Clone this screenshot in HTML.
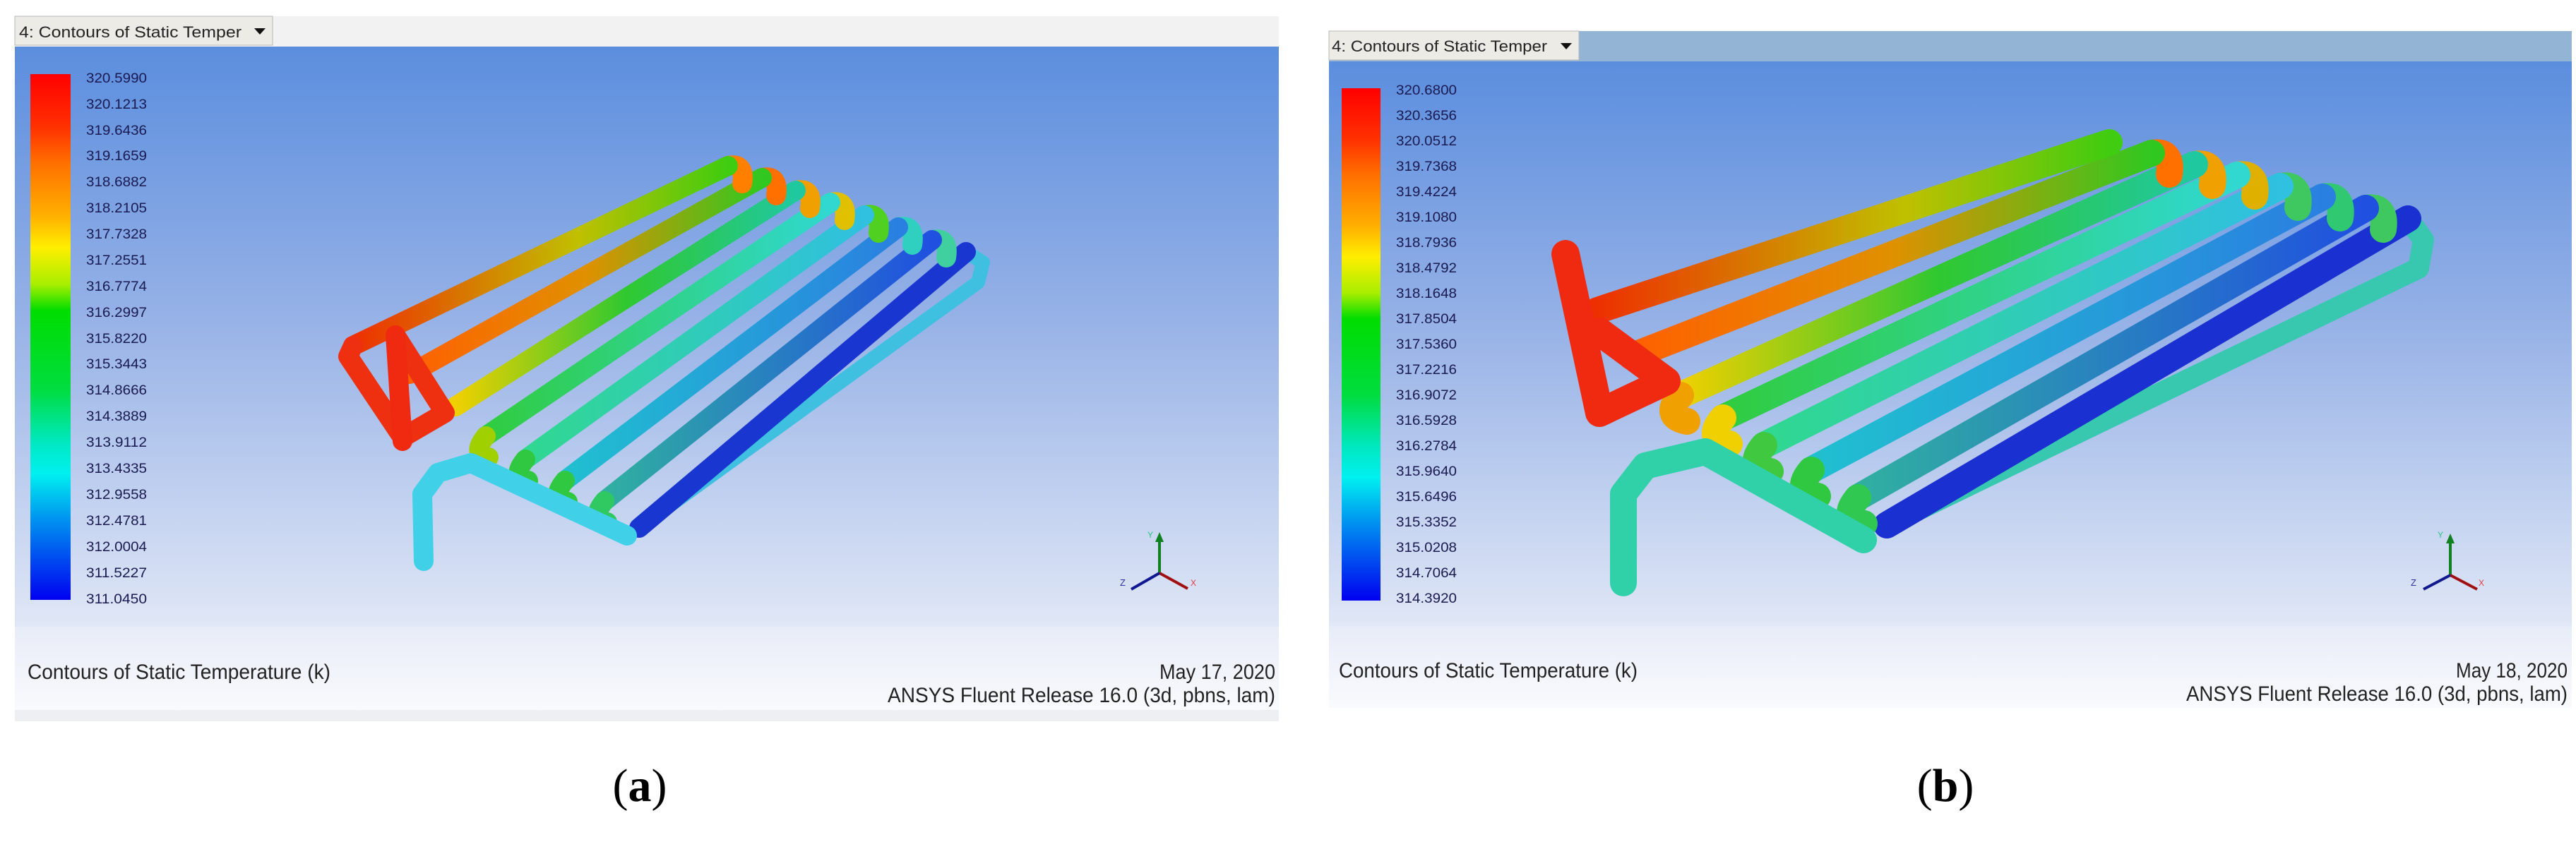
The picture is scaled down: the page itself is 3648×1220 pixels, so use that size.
<!DOCTYPE html>
<html><head><meta charset="utf-8">
<style>
html,body{margin:0;padding:0;background:#fff;}
body{width:3648px;height:1220px;overflow:hidden;position:relative;font-family:"Liberation Sans",sans-serif;}
svg{position:absolute;left:0;top:0;}
</style></head>
<body>
<svg width="3648" height="1220" viewBox="0 0 3648 1220" xmlns="http://www.w3.org/2000/svg" font-family="Liberation Sans, sans-serif">
<defs>
<linearGradient id="bg" x1="0" y1="0" x2="0" y2="1">
<stop offset="0" stop-color="#5b8ede"/><stop offset="0.45" stop-color="#94b0e6"/><stop offset="1" stop-color="#e0e7f6"/>
</linearGradient>
<linearGradient id="ft" x1="0" y1="0" x2="0" y2="1">
<stop offset="0" stop-color="#e8ecf8"/><stop offset="1" stop-color="#f9fafd"/>
</linearGradient>
<linearGradient id="jet" x1="0" y1="0" x2="0" y2="1">
<stop offset="0" stop-color="#ff0000"/><stop offset="0.1" stop-color="#ff3000"/><stop offset="0.17" stop-color="#ff7000"/>
<stop offset="0.27" stop-color="#ffb000"/><stop offset="0.33" stop-color="#ffee00"/><stop offset="0.4" stop-color="#a8ee00"/>
<stop offset="0.45" stop-color="#00dd00"/><stop offset="0.6" stop-color="#00dd40"/><stop offset="0.7" stop-color="#00e8c0"/>
<stop offset="0.76" stop-color="#00f0f0"/><stop offset="0.85" stop-color="#0090f0"/><stop offset="1" stop-color="#0000f0"/>
</linearGradient>
<linearGradient id="gOR" x1="1" y1="0" x2="0" y2="0"><stop offset="0" stop-color="#40cc10"/><stop offset="0.4" stop-color="#c0c000"/><stop offset="1" stop-color="#ee3000"/></linearGradient>
<linearGradient id="gGO" x1="1" y1="0" x2="0" y2="0"><stop offset="0" stop-color="#30c820"/><stop offset="0.5" stop-color="#e09000"/><stop offset="1" stop-color="#ff6000"/></linearGradient>
<linearGradient id="gGY" x1="1" y1="0" x2="0" y2="0"><stop offset="0" stop-color="#20c8a0"/><stop offset="0.5" stop-color="#30c830"/><stop offset="1" stop-color="#f0d000"/></linearGradient>
<linearGradient id="gCG" x1="1" y1="0" x2="0" y2="0"><stop offset="0" stop-color="#30d8d0"/><stop offset="1" stop-color="#30cc40"/></linearGradient>
<linearGradient id="gC" x1="1" y1="0" x2="0" y2="0"><stop offset="0" stop-color="#30c0e0"/><stop offset="1" stop-color="#30d890"/></linearGradient>
<linearGradient id="gCB" x1="1" y1="0" x2="0" y2="0"><stop offset="0" stop-color="#2a80e0"/><stop offset="1" stop-color="#20c0d0"/></linearGradient>
<linearGradient id="gB" x1="1" y1="0" x2="0" y2="0"><stop offset="0" stop-color="#2050e0"/><stop offset="1" stop-color="#30b0a0"/></linearGradient>
<linearGradient id="gDB" x1="0" y1="0" x2="1" y2="0"><stop offset="0" stop-color="#1528c8"/><stop offset="1" stop-color="#2060e0"/></linearGradient>
</defs>

<!-- PANEL A -->
<rect x="21" y="23" width="1790" height="43" fill="#f2f2f2"/>
<rect x="21" y="23" width="365" height="41" fill="#ecebe6" stroke="#b8b8b8"/>
<text x="27" y="53" font-size="22" fill="#222" textLength="315" lengthAdjust="spacingAndGlyphs">4: Contours of Static Temper</text>
<polygon points="360,40 376,40 368,49" fill="#111"/>
<rect x="21" y="66" width="1790" height="822" fill="url(#bg)"/>
<rect x="21" y="888" width="1790" height="118" fill="url(#ft)"/>
<rect x="21" y="1006" width="1790" height="16" fill="#eeeff2"/>
<rect x="43" y="105" width="57" height="745" fill="url(#jet)"/>
<g font-size="19" fill="#1a1a50">
<text x="122" y="117" textLength="86" lengthAdjust="spacingAndGlyphs">320.5990</text>
<text x="122" y="154" textLength="86" lengthAdjust="spacingAndGlyphs">320.1213</text>
<text x="122" y="191" textLength="86" lengthAdjust="spacingAndGlyphs">319.6436</text>
<text x="122" y="227" textLength="86" lengthAdjust="spacingAndGlyphs">319.1659</text>
<text x="122" y="264" textLength="86" lengthAdjust="spacingAndGlyphs">318.6882</text>
<text x="122" y="301" textLength="86" lengthAdjust="spacingAndGlyphs">318.2105</text>
<text x="122" y="338" textLength="86" lengthAdjust="spacingAndGlyphs">317.7328</text>
<text x="122" y="375" textLength="86" lengthAdjust="spacingAndGlyphs">317.2551</text>
<text x="122" y="412" textLength="86" lengthAdjust="spacingAndGlyphs">316.7774</text>
<text x="122" y="449" textLength="86" lengthAdjust="spacingAndGlyphs">316.2997</text>
<text x="122" y="486" textLength="86" lengthAdjust="spacingAndGlyphs">315.8220</text>
<text x="122" y="522" textLength="86" lengthAdjust="spacingAndGlyphs">315.3443</text>
<text x="122" y="559" textLength="86" lengthAdjust="spacingAndGlyphs">314.8666</text>
<text x="122" y="596" textLength="86" lengthAdjust="spacingAndGlyphs">314.3889</text>
<text x="122" y="633" textLength="86" lengthAdjust="spacingAndGlyphs">313.9112</text>
<text x="122" y="670" textLength="86" lengthAdjust="spacingAndGlyphs">313.4335</text>
<text x="122" y="707" textLength="86" lengthAdjust="spacingAndGlyphs">312.9558</text>
<text x="122" y="744" textLength="86" lengthAdjust="spacingAndGlyphs">312.4781</text>
<text x="122" y="781" textLength="86" lengthAdjust="spacingAndGlyphs">312.0004</text>
<text x="122" y="818" textLength="86" lengthAdjust="spacingAndGlyphs">311.5227</text>
<text x="122" y="855" textLength="86" lengthAdjust="spacingAndGlyphs">311.0450</text>
</g>
<!-- tubes a -->
<g fill="none" stroke-linecap="round" stroke-linejoin="round" stroke-width="28">
<polyline points="1368,357 1392,372 1385,400 905,748" stroke="#40c0e0" stroke-width="20"/>
<line x1="1368" y1="357" x2="905" y2="748" stroke="#1a36d0"/>
<path d="M1320,340 Q1345,335 1340,365" stroke="#40d0a0"/>
<line x1="1320" y1="340" x2="856" y2="710" stroke="url(#gB)"/>
<path d="M856,710 Q835,735 860,740" stroke="#30c860"/>
<path d="M1272,322 Q1297,317 1292,347" stroke="#30d0c0"/>
<line x1="1272" y1="322" x2="800" y2="681" stroke="url(#gCB)"/>
<path d="M800,681 Q779,706 804,711" stroke="#30c840"/>
<path d="M1224,305 Q1249,300 1244,330" stroke="#50d020"/>
<line x1="1224" y1="305" x2="744" y2="651" stroke="url(#gC)"/>
<path d="M744,651 Q723,676 748,681" stroke="#30c840"/>
<path d="M1176,287 Q1201,282 1196,312" stroke="#e0c000"/>
<line x1="1176" y1="287" x2="688" y2="618" stroke="url(#gCG)"/>
<path d="M688,618 Q667,643 692,648" stroke="#a0d000"/>
<path d="M1127,270 Q1152,265 1147,295" stroke="#f0a000"/>
<line x1="1127" y1="270" x2="645" y2="576" stroke="url(#gGY)"/>
<path d="M1079,252 Q1104,247 1099,277" stroke="#ff7000"/>
<line x1="1079" y1="252" x2="580" y2="530" stroke="url(#gGO)"/>
<path d="M1031,235 Q1056,230 1051,260" stroke="#ff8000"/>
<line x1="1031" y1="235" x2="500" y2="490" stroke="url(#gOR)"/>
<polyline points="888,759 667,656 620,670 598,700 600,795" stroke="#40d0e8"/>
<polyline points="500,490 493,505 570,620 630,585 560,475" stroke="#ee3010"/>
<line x1="560" y1="475" x2="570" y2="625" stroke="#f02a10"/>
</g>
<!-- axes a -->
<g stroke-width="4" fill="none">
<line x1="1642" y1="812" x2="1642" y2="764" stroke="#108020"/>
<line x1="1642" y1="812" x2="1682" y2="834" stroke="#a01010"/>
<line x1="1642" y1="812" x2="1602" y2="835" stroke="#101890"/>
</g>
<polygon points="1636,768 1642,754 1648,768" fill="#108020"/>
<text x="1625" y="762" font-size="12" fill="#30c080">Y</text>
<text x="1686" y="830" font-size="12" fill="#e04040">X</text>
<text x="1586" y="830" font-size="13" fill="#3030a0">Z</text>
<text x="39" y="962" font-size="30" fill="#222" textLength="429" lengthAdjust="spacingAndGlyphs">Contours of Static Temperature (k)</text>
<text x="1806" y="962" font-size="30" fill="#222" text-anchor="end" textLength="164" lengthAdjust="spacingAndGlyphs">May 17, 2020</text>
<text x="1806" y="995" font-size="30" fill="#222" text-anchor="end" textLength="549" lengthAdjust="spacingAndGlyphs">ANSYS Fluent Release 16.0 (3d, pbns, lam)</text>
<text x="906" y="1135" font-size="66" fill="#000" text-anchor="middle" font-family="Liberation Serif, serif">(<tspan font-weight="bold">a</tspan>)</text>

<!-- PANEL B -->
<rect x="1882" y="44" width="1760" height="43" fill="#93b4d4"/>
<rect x="1882" y="44" width="354" height="41" fill="#ecebe6" stroke="#b8b8b8"/>
<text x="1886" y="73" font-size="22" fill="#222" textLength="305" lengthAdjust="spacingAndGlyphs">4: Contours of Static Temper</text>
<polygon points="2210,61 2226,61 2218,70" fill="#111"/>
<rect x="1882" y="87" width="1760" height="800" fill="url(#bg)"/>
<rect x="1882" y="887" width="1760" height="116" fill="url(#ft)"/>
<rect x="1900" y="125" width="55" height="726" fill="url(#jet)"/>
<g font-size="19" fill="#1a1a50">
<text x="1977" y="134" textLength="86" lengthAdjust="spacingAndGlyphs">320.6800</text>
<text x="1977" y="170" textLength="86" lengthAdjust="spacingAndGlyphs">320.3656</text>
<text x="1977" y="206" textLength="86" lengthAdjust="spacingAndGlyphs">320.0512</text>
<text x="1977" y="242" textLength="86" lengthAdjust="spacingAndGlyphs">319.7368</text>
<text x="1977" y="278" textLength="86" lengthAdjust="spacingAndGlyphs">319.4224</text>
<text x="1977" y="314" textLength="86" lengthAdjust="spacingAndGlyphs">319.1080</text>
<text x="1977" y="350" textLength="86" lengthAdjust="spacingAndGlyphs">318.7936</text>
<text x="1977" y="386" textLength="86" lengthAdjust="spacingAndGlyphs">318.4792</text>
<text x="1977" y="422" textLength="86" lengthAdjust="spacingAndGlyphs">318.1648</text>
<text x="1977" y="458" textLength="86" lengthAdjust="spacingAndGlyphs">317.8504</text>
<text x="1977" y="494" textLength="86" lengthAdjust="spacingAndGlyphs">317.5360</text>
<text x="1977" y="530" textLength="86" lengthAdjust="spacingAndGlyphs">317.2216</text>
<text x="1977" y="566" textLength="86" lengthAdjust="spacingAndGlyphs">316.9072</text>
<text x="1977" y="602" textLength="86" lengthAdjust="spacingAndGlyphs">316.5928</text>
<text x="1977" y="638" textLength="86" lengthAdjust="spacingAndGlyphs">316.2784</text>
<text x="1977" y="674" textLength="86" lengthAdjust="spacingAndGlyphs">315.9640</text>
<text x="1977" y="710" textLength="86" lengthAdjust="spacingAndGlyphs">315.6496</text>
<text x="1977" y="746" textLength="86" lengthAdjust="spacingAndGlyphs">315.3352</text>
<text x="1977" y="782" textLength="86" lengthAdjust="spacingAndGlyphs">315.0208</text>
<text x="1977" y="818" textLength="86" lengthAdjust="spacingAndGlyphs">314.7064</text>
<text x="1977" y="854" textLength="86" lengthAdjust="spacingAndGlyphs">314.3920</text>
</g>
<g fill="none" stroke-linecap="round" stroke-linejoin="round" stroke-width="38">
<polyline points="3410,310 3432,340 3425,380 2672,744" stroke="#38c8b0" stroke-width="30"/>
<line x1="3410" y1="310" x2="2672" y2="744" stroke="#1a30d0"/>
<path d="M3350,295 Q3380,290 3375,325" stroke="#40c860"/>
<line x1="3350" y1="295" x2="2631" y2="705" stroke="url(#gB)"/>
<path d="M2631,705 Q2605,735 2640,742" stroke="#30c850"/>
<path d="M3289,279 Q3319,274 3314,309" stroke="#30c870"/>
<line x1="3289" y1="279" x2="2565" y2="666" stroke="url(#gCB)"/>
<path d="M2565,666 Q2539,696 2574,703" stroke="#30c840"/>
<path d="M3229,264 Q3259,259 3254,294" stroke="#40c860"/>
<line x1="3229" y1="264" x2="2498" y2="631" stroke="url(#gC)"/>
<path d="M2498,631 Q2472,661 2507,668" stroke="#40c840"/>
<path d="M3168,248 Q3198,243 3193,278" stroke="#e0b000"/>
<line x1="3168" y1="248" x2="2440" y2="592" stroke="url(#gCG)"/>
<path d="M2440,592 Q2414,622 2449,629" stroke="#f0d000"/>
<path d="M3108,233 Q3138,228 3133,263" stroke="#f0a000"/>
<line x1="3108" y1="233" x2="2380" y2="560" stroke="url(#gGY)"/>
<path d="M2380,560 Q2354,590 2389,597" stroke="#f0a000"/>
<path d="M3047,217 Q3077,212 3072,247" stroke="#ff7000"/>
<line x1="3047" y1="217" x2="2310" y2="505" stroke="url(#gGO)"/>
<line x1="2987" y1="202" x2="2262" y2="440" stroke="url(#gOR)"/>
<polyline points="2639,765 2415,640 2330,660 2299,700 2299,826" stroke="#30d0a8"/>
<polyline points="2265,470 2360,540 2265,585 2217,360" stroke="#f02a10" stroke-width="40"/>
</g>
<g stroke-width="4" fill="none">
<line x1="3470" y1="815" x2="3470" y2="766" stroke="#108020"/>
<line x1="3470" y1="815" x2="3508" y2="835" stroke="#a01010"/>
<line x1="3470" y1="815" x2="3432" y2="835" stroke="#101890"/>
</g>
<polygon points="3464,770 3470,756 3476,770" fill="#108020"/>
<text x="3452" y="762" font-size="12" fill="#30c080">Y</text>
<text x="3510" y="830" font-size="12" fill="#e04040">X</text>
<text x="3414" y="830" font-size="13" fill="#3030a0">Z</text>
<text x="1896" y="960" font-size="30" fill="#222" textLength="423" lengthAdjust="spacingAndGlyphs">Contours of Static Temperature (k)</text>
<text x="3636" y="960" font-size="30" fill="#222" text-anchor="end" textLength="158" lengthAdjust="spacingAndGlyphs">May 18, 2020</text>
<text x="3636" y="993" font-size="30" fill="#222" text-anchor="end" textLength="540" lengthAdjust="spacingAndGlyphs">ANSYS Fluent Release 16.0 (3d, pbns, lam)</text>
<text x="2755" y="1135" font-size="66" fill="#000" text-anchor="middle" font-family="Liberation Serif, serif">(<tspan font-weight="bold">b</tspan>)</text>
</svg>
</body></html>
